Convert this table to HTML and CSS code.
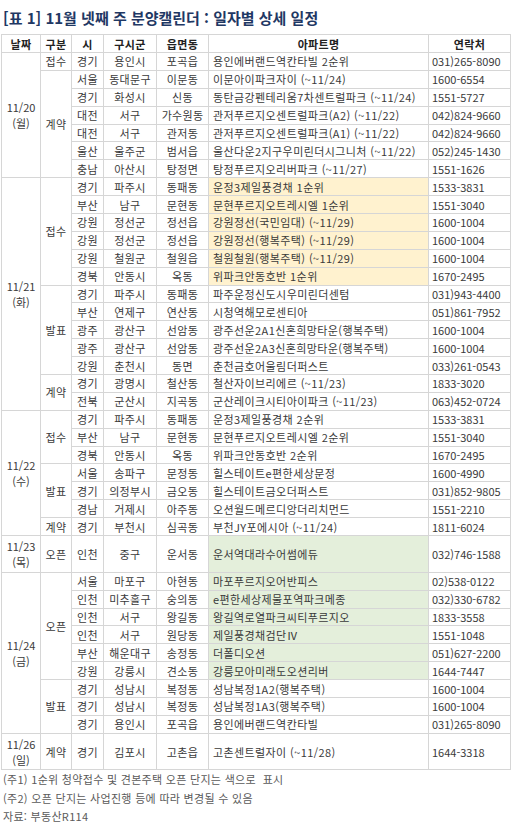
FILE: index.html
```html
<!DOCTYPE html>
<html lang="ko">
<head>
<meta charset="utf-8">
<link rel="stylesheet" href="styles.css">
</head>
<body>
<div class="page">
  <h1 class="title">[표 1] 11월 넷째 주 분양캘린더 : 일자별 상세 일정</h1>
  <table class="cal">
    <colgroup>
      <col class="c-date"><col class="c-type"><col class="c-si"><col class="c-gu"><col class="c-dong"><col class="c-apt"><col class="c-tel">
    </colgroup>
    <thead>
      <tr><th>날짜</th><th>구분</th><th>시</th><th>구시군</th><th>읍면동</th><th>아파트명</th><th>연락처</th></tr>
    </thead>
    <tbody>
      <tr><td rowspan="7" class="date">11/20<br>(월)</td><td>접수</td><td>경기</td><td>용인시</td><td>포곡읍</td><td class="apt">용인에버랜드역칸타빌 2순위</td><td class="tel">031)265-8090</td></tr>
      <tr><td rowspan="6">계약</td><td>서울</td><td>동대문구</td><td>이문동</td><td class="apt">이문아이파크자이 (~11/24)</td><td class="tel">1600-6554</td></tr>
      <tr><td>경기</td><td>화성시</td><td>신동</td><td class="apt">동탄금강펜테리움7차센트럴파크 (~11/24)</td><td class="tel">1551-5727</td></tr>
      <tr><td>대전</td><td>서구</td><td>가수원동</td><td class="apt">관저푸르지오센트럴파크(A2) (~11/22)</td><td class="tel">042)824-9660</td></tr>
      <tr><td>대전</td><td>서구</td><td>관저동</td><td class="apt">관저푸르지오센트럴파크(A1) (~11/22)</td><td class="tel">042)824-9660</td></tr>
      <tr><td>울산</td><td>울주군</td><td>범서읍</td><td class="apt">울산다운2지구우미린더시그니처 (~11/22)</td><td class="tel">052)245-1430</td></tr>
      <tr><td>충남</td><td>아산시</td><td>탕정면</td><td class="apt">탕정푸르지오리버파크 (~11/27)</td><td class="tel">1551-1626</td></tr>

      <tr><td rowspan="13" class="date">11/21<br>(화)</td><td rowspan="6">접수</td><td>경기</td><td>파주시</td><td>동패동</td><td class="apt hl-y">운정3제일풍경채 1순위</td><td class="tel">1533-3831</td></tr>
      <tr><td>부산</td><td>남구</td><td>문현동</td><td class="apt hl-y">문현푸르지오트레시엘 1순위</td><td class="tel">1551-3040</td></tr>
      <tr><td>강원</td><td>정선군</td><td>정선읍</td><td class="apt hl-y">강원정선(국민임대) (~11/29)</td><td class="tel">1600-1004</td></tr>
      <tr><td>강원</td><td>정선군</td><td>정선읍</td><td class="apt hl-y">강원정선(행복주택) (~11/29)</td><td class="tel">1600-1004</td></tr>
      <tr><td>강원</td><td>철원군</td><td>철원읍</td><td class="apt hl-y">철원철원(행복주택) (~11/29)</td><td class="tel">1600-1004</td></tr>
      <tr><td>경북</td><td>안동시</td><td>옥동</td><td class="apt hl-y">위파크안동호반 1순위</td><td class="tel">1670-2495</td></tr>
      <tr><td rowspan="5">발표</td><td>경기</td><td>파주시</td><td>동패동</td><td class="apt">파주운정신도시우미린더센텀</td><td class="tel">031)943-4400</td></tr>
      <tr><td>부산</td><td>연제구</td><td>연산동</td><td class="apt">시청역해모로센티아</td><td class="tel">051)861-7952</td></tr>
      <tr><td>광주</td><td>광산구</td><td>선암동</td><td class="apt">광주선운2A1신혼희망타운(행복주택)</td><td class="tel">1600-1004</td></tr>
      <tr><td>광주</td><td>광산구</td><td>선암동</td><td class="apt">광주선운2A3신혼희망타운(행복주택)</td><td class="tel">1600-1004</td></tr>
      <tr><td>강원</td><td>춘천시</td><td>동면</td><td class="apt">춘천금호어울림더퍼스트</td><td class="tel">033)261-0543</td></tr>
      <tr><td rowspan="2">계약</td><td>경기</td><td>광명시</td><td>철산동</td><td class="apt">철산자이브리에르 (~11/23)</td><td class="tel">1833-3020</td></tr>
      <tr><td>전북</td><td>군산시</td><td>지곡동</td><td class="apt">군산레이크시티아이파크 (~11/23)</td><td class="tel">063)452-0724</td></tr>

      <tr><td rowspan="7" class="date">11/22<br>(수)</td><td rowspan="3">접수</td><td>경기</td><td>파주시</td><td>동패동</td><td class="apt">운정3제일풍경채 2순위</td><td class="tel">1533-3831</td></tr>
      <tr><td>부산</td><td>남구</td><td>문현동</td><td class="apt">문현푸르지오트레시엘 2순위</td><td class="tel">1551-3040</td></tr>
      <tr><td>경북</td><td>안동시</td><td>옥동</td><td class="apt">위파크안동호반 2순위</td><td class="tel">1670-2495</td></tr>
      <tr><td rowspan="3">발표</td><td>서울</td><td>송파구</td><td>문정동</td><td class="apt">힐스테이트e편한세상문정</td><td class="tel">1600-4990</td></tr>
      <tr><td>경기</td><td>의정부시</td><td>금오동</td><td class="apt">힐스테이트금오더퍼스트</td><td class="tel">031)852-9805</td></tr>
      <tr><td>경남</td><td>거제시</td><td>아주동</td><td class="apt">오션월드메르디앙더리치먼드</td><td class="tel">1551-2210</td></tr>
      <tr><td>계약</td><td>경기</td><td>부천시</td><td>심곡동</td><td class="apt">부천JY포에시아 (~11/24)</td><td class="tel">1811-6024</td></tr>

      <tr class="tall"><td class="date">11/23<br>(목)</td><td>오픈</td><td>인천</td><td>중구</td><td>운서동</td><td class="apt hl-g">운서역대라수어썸에듀</td><td class="tel">032)746-1588</td></tr>

      <tr><td rowspan="9" class="date">11/24<br>(금)</td><td rowspan="6">오픈</td><td>서울</td><td>마포구</td><td>아현동</td><td class="apt hl-g">마포푸르지오어반피스</td><td class="tel">02)538-0122</td></tr>
      <tr><td>인천</td><td>미추홀구</td><td>숭의동</td><td class="apt hl-g">e편한세상제물포역파크메종</td><td class="tel">032)330-6782</td></tr>
      <tr><td>인천</td><td>서구</td><td>왕길동</td><td class="apt hl-g">왕길역로열파크씨티푸르지오</td><td class="tel">1833-3558</td></tr>
      <tr><td>인천</td><td>서구</td><td>원당동</td><td class="apt hl-g">제일풍경채검단Ⅳ</td><td class="tel">1551-1048</td></tr>
      <tr><td>부산</td><td>해운대구</td><td>송정동</td><td class="apt hl-g">더폴디오션</td><td class="tel">051)627-2200</td></tr>
      <tr><td>강원</td><td>강릉시</td><td>견소동</td><td class="apt hl-g">강릉모아미래도오션리버</td><td class="tel">1644-7447</td></tr>
      <tr><td rowspan="3">발표</td><td>경기</td><td>성남시</td><td>복정동</td><td class="apt">성남복정1A2(행복주택)</td><td class="tel">1600-1004</td></tr>
      <tr><td>경기</td><td>성남시</td><td>복정동</td><td class="apt">성남복정1A3(행복주택)</td><td class="tel">1600-1004</td></tr>
      <tr><td>경기</td><td>용인시</td><td>포곡읍</td><td class="apt">용인에버랜드역칸타빌</td><td class="tel">031)265-8090</td></tr>

      <tr class="tall"><td class="date">11/26<br>(일)</td><td>계약</td><td>경기</td><td>김포시</td><td>고촌읍</td><td class="apt">고촌센트럴자이 (~11/28)</td><td class="tel">1644-3318</td></tr>
    </tbody>
  </table>
  <ul class="notes">
    <li>(주1) 1순위 청약접수 및 견본주택 오픈 단지는 색으로&nbsp; 표시</li>
    <li>(주2) 오픈 단지는 사업진행 등에 따라 변경될 수 있음</li>
    <li>자료: 부동산R114</li>
  </ul>
</div>
</body>
</html>
```

FILE: styles.css
```css
html, body {
  margin: 0;
  padding: 0;
  background: #ffffff;
}

.page {
  padding: 0 2px 0 1px;
  font-family: "Noto Sans CJK KR", "Noto Sans", sans-serif;
  color: #3a3a3a;
}

.title {
  margin: 0;
  padding: 8px 0 0 2px;
  height: 26px;
  line-height: 20px;
  font-size: 15px;
  font-weight: 700;
  color: #1f3864;
  white-space: nowrap;
}

.cal {
  width: 509px;
  border-collapse: collapse;
  table-layout: fixed;
  font-size: 11px;
}

.c-date { width: 39px; }
.c-type { width: 31px; }
.c-si { width: 32px; }
.c-gu { width: 53px; }
.c-dong { width: 52px; }
.c-apt { width: 220px; }
.c-tel { width: 82px; }

.cal th,
.cal td {
  border: 1px solid #d6d6d6;
  padding: 0;
  height: 16.9px;
  line-height: 14px;
  text-align: center;
  vertical-align: middle;
  white-space: nowrap;
  overflow: hidden;
  letter-spacing: 0.3px;
}

.cal th {
  height: 17px;
  font-weight: 700;
  color: #222222;
}

.cal td.date {
  line-height: 16px;
  letter-spacing: 0;
}

.cal tr.tall td {
  height: 35.7px;
}

.cal td.apt {
  text-align: left;
  padding-left: 4px;
  letter-spacing: 0.4px;
}

.cal td.tel {
  text-align: left;
  padding-left: 3px;
  letter-spacing: 0;
}

.cal td.hl-y {
  background: #fff2cf;
}

.cal td.hl-g {
  background: #e4efdb;
}

.notes {
  list-style: none;
  margin: 0;
  padding: 0 0 0 2px;
  font-size: 11px;
  line-height: 18.5px;
  color: #5a5a5a;
  letter-spacing: 0.3px;
}
```
